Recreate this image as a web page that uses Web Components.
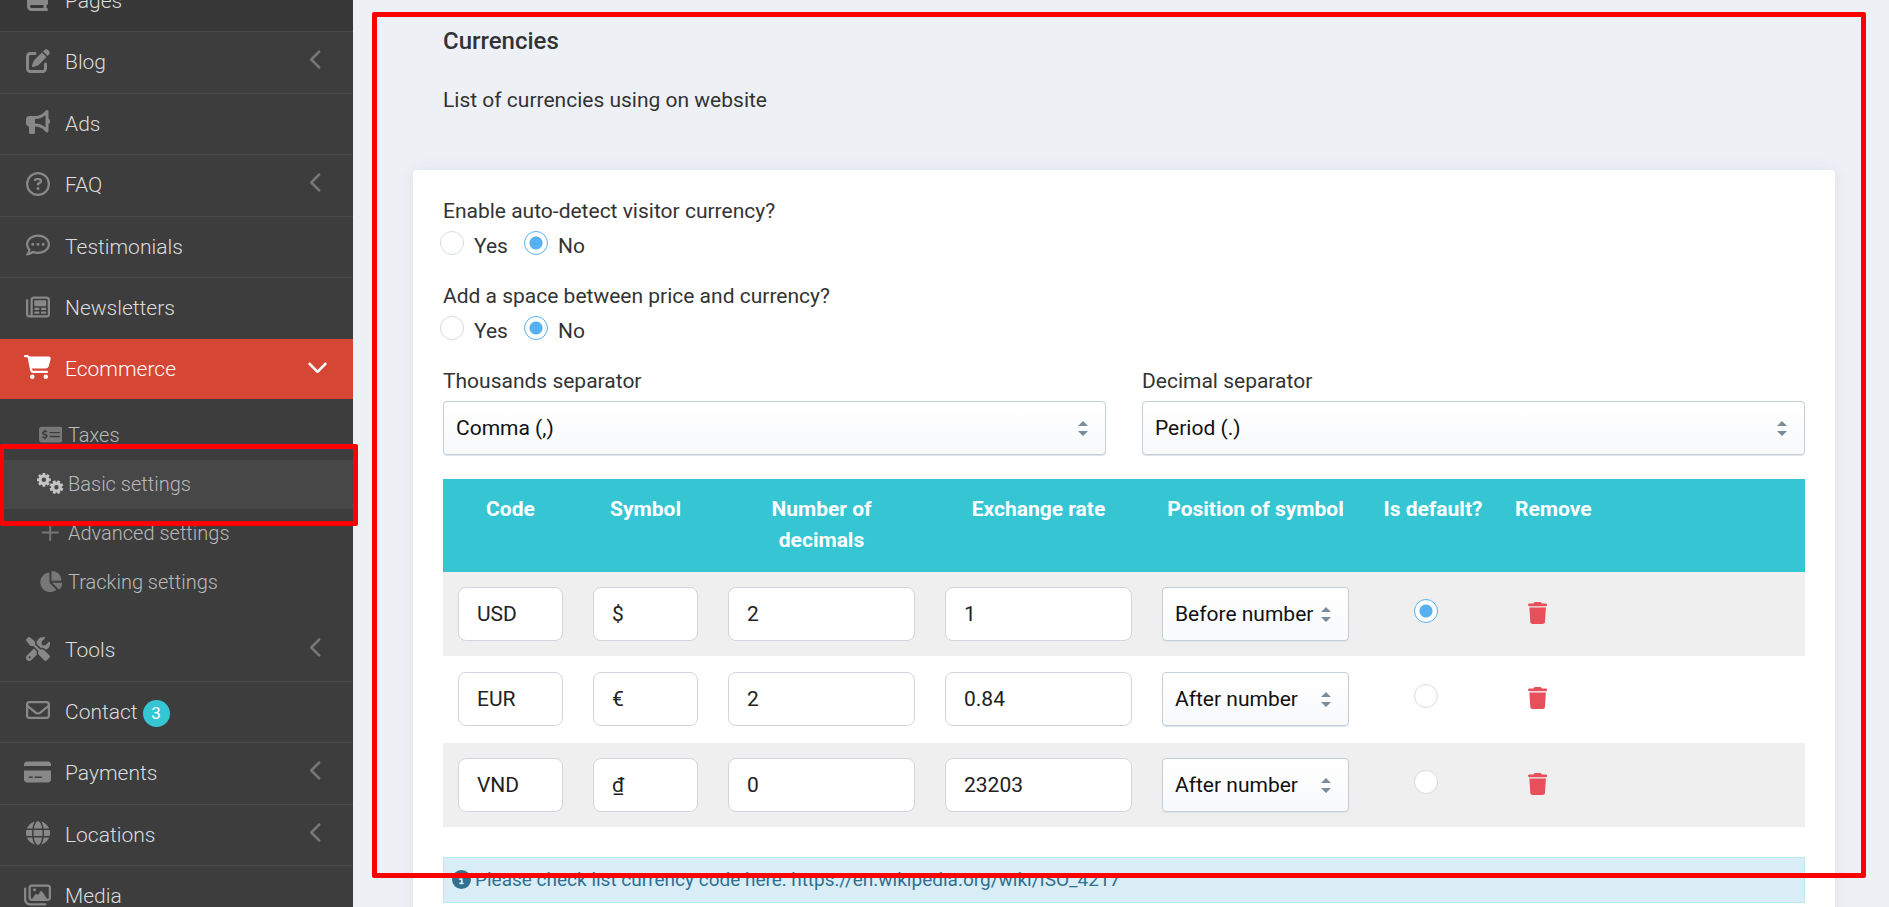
<!DOCTYPE html>
<html lang="en">
<head>
<meta charset="utf-8">
<title>Currencies</title>
<style>
  html, body { margin: 0; height: 100%; }
  body { font-family: Roboto, "Liberation Sans", sans-serif; font-size: 21px; line-height: 31px; color: #333; background: #edf1f6; overflow: hidden; }
</style>
</head>
<body>
<admin-app></admin-app>
<script>
const ICONS = {
  book: ['0 0 448 512', 'M96 0C43 0 0 43 0 96V416c0 53 43 96 96 96H384h32c17.700 0 32-14.300 32-32s-14.300-32-32-32V384c17.700 0 32-14.300 32-32V32c0-17.700-14.300-32-32-32H384 96zm0 384H352v64H96c-17.700 0-32-14.300-32-32s14.300-32 32-32z'],
  pen: ['0 0 512 512', 'M471.600 21.700c-21.900-21.900-57.300-21.900-79.200 0L362.300 51.700l97.900 97.900 30.100-30.100c21.900-21.900 21.900-57.300 0-79.200L471.600 21.700zm-299.200 220c-6.100 6.100-10.800 13.600-13.500 21.900l-29.600 88.800c-2.900 8.600-.6 18.100 5.800 24.600s15.900 8.700 24.600 5.800l88.800-29.600c8.200-2.700 15.700-7.400 21.900-13.500L437.700 172.300 339.700 74.300 172.400 241.700zM96 64C43 64 0 107 0 160V416c0 53 43 96 96 96H352c53 0 96-43 96-96V320c0-17.700-14.300-32-32-32s-32 14.300-32 32v96c0 17.700-14.300 32-32 32H96c-17.700 0-32-14.300-32-32V160c0-17.700 14.300-32 32-32h96c17.700 0 32-14.300 32-32s-14.300-32-32-32H96z'],
  horn: ['0 0 512 512', 'M480 32c0-12.900-7.800-24.600-19.800-29.600s-25.700-2.200-34.900 6.900L381.700 53c-48 48-113.100 75-181 75H192 160 64c-35.300 0-64 28.700-64 64v96c0 35.300 28.700 64 64 64l0 128c0 17.700 14.300 32 32 32h64c17.700 0 32-14.300 32-32V352l8.700 0c67.900 0 133 27 181 75l43.600 43.600c9.200 9.200 22.900 11.900 34.900 6.900s19.800-16.600 19.800-29.600V300.400c18.600-8.800 32-32.500 32-60.400s-13.400-51.600-32-60.400V32zm-64 76.700V240 371.300C357.200 317.800 280.500 288 200.700 288H192V192h8.700c79.800 0 156.500-29.800 215.300-83.300z'],
  question: ['0 0 512 512', 'M464 256A208 208 0 1 0 48 256a208 208 0 1 0 416 0zM0 256a256 256 0 1 1 512 0A256 256 0 1 1 0 256zm169.800-90.700c7.900-22.300 29.100-37.300 52.800-37.300h58.300c34.900 0 63.100 28.300 63.100 63.100c0 22.600-12.100 43.500-31.700 54.800L280 264.400c-.2 13-10.900 23.600-24 23.600c-13.300 0-24-10.700-24-24V250.500c0-8.600 4.600-16.500 12.100-20.800l44.300-25.400c4.700-2.700 7.600-7.700 7.600-13.100c0-8.400-6.800-15.100-15.100-15.100H222.600c-3.400 0-6.400 2.100-7.500 5.300l-.4 1.200c-4.400 12.500-18.200 19-30.600 14.600s-19-18.200-14.600-30.600l.3-1.200zM224 352a32 32 0 1 1 64 0 32 32 0 1 1 -64 0z'],
  comment: ['0 0 512 512', 'M168.200 384.900c-15-5.400-31.700-3.100-44.600 6.400c-8.200 6-22.300 14.800-39.400 22.700c5.600-14.700 9.900-31.300 11.300-49.400c1-12.900-3.300-25.700-11.800-35.500C60.400 302.800 48 272 48 240c0-79.500 83.300-160 208-160s208 80.500 208 160s-83.300 160-208 160c-31.600 0-61.300-5.500-87.800-15.100zM26.300 423.800c-1.600 2.700-3.300 5.400-5.100 8.100l-.3 .5c-1.600 2.300-3.200 4.600-4.800 6.900c-3.500 4.700-7.300 9.300-11.300 13.500c-4.600 4.600-5.900 11.400-3.400 17.400c2.500 6 8.300 9.900 14.800 9.900c5.100 0 10.200-.3 15.300-.8l.7-.1c4.400-.5 8.800-1.100 13.200-1.900c.8-.1 1.600-.3 2.400-.5c17.800-3.500 34.900-9.500 50.100-16.100c22.900-10 42.400-21.900 54.300-30.600c31.800 11.500 67 17.900 104.100 17.900c141.400 0 256-93.100 256-208S397.400 32 256 32S0 125.100 0 240c0 45.100 17.700 86.800 47.700 120.900c-1.900 24.500-11.400 46.300-21.400 62.900zM144 272a32 32 0 1 0 0-64 32 32 0 1 0 0 64zm144-32a32 32 0 1 0 -64 0 32 32 0 1 0 64 0zm80 32a32 32 0 1 0 0-64 32 32 0 1 0 0 64z'],
  news: ['0 0 512 512', 'M168 80c-13.300 0-24 10.700-24 24V408c0 8.400-1.400 16.500-4.100 24H440c13.300 0 24-10.700 24-24V104c0-13.300-10.700-24-24-24H168zM72 480c-39.800 0-72-32.200-72-72V112C0 98.700 10.700 88 24 88s24 10.700 24 24V408c0 13.300 10.700 24 24 24s24-10.700 24-24V104c0-39.800 32.200-72 72-72H440c39.800 0 72 32.200 72 72V408c0 39.800-32.200 72-72 72H72zM176 136c0-13.300 10.700-24 24-24H408c13.300 0 24 10.700 24 24v80c0 13.300-10.700 24-24 24H200c-13.300 0-24-10.700-24-24V136zm24 136h64c13.300 0 24 10.700 24 24s-10.700 24-24 24H200c-13.300 0-24-10.700-24-24s10.700-24 24-24zm144 0h64c13.300 0 24 10.700 24 24s-10.700 24-24 24H344c-13.300 0-24-10.700-24-24s10.700-24 24-24zM200 352h64c13.300 0 24 10.700 24 24s-10.700 24-24 24H200c-13.300 0-24-10.700-24-24s10.700-24 24-24zm144 0h64c13.300 0 24 10.700 24 24s-10.700 24-24 24H344c-13.300 0-24-10.700-24-24s10.700-24 24-24z'],
  cart: ['0 0 576 512', 'M0 24C0 10.700 10.700 0 24 0H69.500c22 0 41.500 12.800 50.600 32h411c26.300 0 45.500 25 38.600 50.400l-41 152.300c-8.500 31.400-37 53.300-69.500 53.300H170.700l5.400 28.500c2.200 11.300 12.100 19.500 23.600 19.500H488c13.300 0 24 10.700 24 24s-10.700 24-24 24H199.700c-34.600 0-64.300-24.600-70.700-58.500L77.400 54.500c-.7-3.800-4-6.500-7.900-6.500H24C10.700 48 0 37.300 0 24zM128 464a48 48 0 1 1 96 0 48 48 0 1 1 -96 0zm336-48a48 48 0 1 1 0 96 48 48 0 1 1 0-96z'],
  moneycheck: ['0 0 576 512', 'M64 64C28.700 64 0 92.700 0 128V384c0 35.300 28.700 64 64 64H512c35.300 0 64-28.700 64-64V128c0-35.300-28.700-64-64-64H64zM272 192H496c8.800 0 16 7.200 16 16s-7.200 16-16 16H272c-8.800 0-16-7.200-16-16s7.200-16 16-16zM256 304c0-8.800 7.200-16 16-16H496c8.800 0 16 7.200 16 16s-7.200 16-16 16H272c-8.800 0-16-7.200-16-16zM164 152v13.900c7.500 1.200 14.600 2.900 21.100 4.700c10.700 2.800 17 13.800 14.200 24.500s-13.800 17-24.500 14.200c-11-2.900-21.600-5-31.200-5.200c-7.900-.1-16 1.800-21.500 5c-4.800 2.800-6.200 5.600-6.200 9.300c0 1.800 .1 3.500 5.300 6.700c6.300 3.800 15.500 6.700 28.300 10.500l.7 .2c11.200 3.400 25.600 7.700 37.100 15c12.900 8.100 24.300 21.300 24.600 41.600c.3 20.900-10.500 36.100-24.800 45c-7.200 4.500-15.200 7.300-23.200 9V360c0 11-9 20-20 20s-20-9-20-20V345.400c-10.300-2.200-20-5.500-28.200-8.400c-2.100-.7-4.100-1.400-6.100-2.100c-10.500-3.500-16.100-14.800-12.600-25.300s14.800-16.100 25.300-12.600c2.500 .8 4.900 1.700 7.200 2.400c13.600 4.600 24 8.100 35.100 8.500c8.600 .3 16.500-1.600 21.400-4.700c4.100-2.500 6-5.500 5.900-10.500c0-2.900-.8-5-5.900-8.200c-6.300-4-15.400-6.900-28-10.700l-1.700-.5c-10.900-3.300-24.600-7.400-35.600-14c-12.700-7.700-24.600-20.500-24.700-40.700c-.1-21.100 11.800-35.700 25.800-43.900c6.900-4.100 14.500-6.800 22.200-8.500V152c0-11 9-20 20-20s20 9 20 20z'],
  plus: ['0 0 448 512', 'M248 72c0-13.300-10.700-24-24-24s-24 10.700-24 24V232H40c-13.300 0-24 10.700-24 24s10.700 24 24 24H200V440c0 13.300 10.700 24 24 24s24-10.700 24-24V280H408c13.300 0 24-10.700 24-24s-10.700-24-24-24H248V72z'],
  pie: ['0 0 576 512', 'M304 240V16.600c0-9 7-16.600 16-16.600C443.700 0 544 100.300 544 224c0 9-7.600 16-16.600 16H304zM32 272C32 150.700 122.100 50.300 239 34.300c9.200-1.300 17 6.100 17 15.400V288L412.500 444.500c6.700 6.700 6.200 17.700-1.500 23.100C371.800 495.600 323.800 512 272 512C139.500 512 32 404.600 32 272zm526.400 16c9.300 0 16.600 7.800 15.400 17c-7.700 55.900-34.600 105.600-73.900 142.300c-6 5.600-15.400 5.200-21.200-.7L320 288H558.400z'],
  tools: ['0 0 512 512', 'M78.600 5C69.100-2.400 55.600-1.500 47 7L7 47c-8.500 8.500-9.400 22-2.100 31.600l80 104c4.500 5.900 11.600 9.400 19 9.400h54.100l109 109c-14.700 29-10 65.400 14.300 89.600l112 112c12.500 12.500 32.800 12.500 45.300 0l64-64c12.500-12.500 12.500-32.800 0-45.300l-112-112c-24.200-24.200-60.600-29-89.600-14.300l-109-109V104c0-7.500-3.500-14.500-9.400-19L78.600 5zM19.900 396.100C7.200 408.800 0 426.100 0 444.100C0 481.600 30.400 512 67.900 512c18 0 35.300-7.200 48-19.900L233.700 374.300c-7.800-20.900-9-43.600-3.600-65.100l-61.700-61.700L19.900 396.100zM512 144c0-10.500-1.100-20.700-3.200-30.500c-2.400-11.200-16.100-14.100-24.200-6l-63.900 63.900c-3 3-7.100 4.700-11.300 4.700H352c-8.800 0-16-7.200-16-16V102.600c0-4.200 1.700-8.300 4.700-11.300l63.900-63.900c8.100-8.100 5.200-21.800-6-24.200C388.700 1.100 378.500 0 368 0C288.500 0 224 64.500 224 144l0 .8 85.300 85.300c36-9.100 75.800 .5 104 28.700L429 274.500c49-23 83-72.800 83-130.500zM56 432a24 24 0 1 1 48 0 24 24 0 1 1 -48 0z'],
  mail: ['0 0 512 512', 'M64 112c-8.800 0-16 7.200-16 16v22.100L220.500 291.700c20.700 17 50.400 17 71.100 0L464 150.100V128c0-8.800-7.200-16-16-16H64zM48 212.200V384c0 8.800 7.200 16 16 16H448c8.800 0 16-7.200 16-16V212.200L322 328.800c-38.400 31.500-93.700 31.500-132 0L48 212.200zM0 128C0 92.700 28.700 64 64 64H448c35.300 0 64 28.700 64 64V384c0 35.300-28.700 64-64 64H64c-35.300 0-64-28.700-64-64V128z'],
  card: ['0 0 576 512', 'M64 32C28.700 32 0 60.700 0 96v32H576V96c0-35.300-28.700-64-64-64H64zM576 224H0V416c0 35.300 28.700 64 64 64H512c35.300 0 64-28.700 64-64V224zM112 352h64c8.800 0 16 7.200 16 16s-7.200 16-16 16H112c-8.800 0-16-7.200-16-16s7.200-16 16-16zm112 16c0-8.800 7.200-16 16-16H368c8.800 0 16 7.200 16 16s-7.200 16-16 16H240c-8.800 0-16-7.200-16-16z'],
  globe: ['0 0 512 512', 'M352 256c0 22.200-1.200 43.600-3.300 64H163.300c-2.200-20.400-3.300-41.800-3.300-64s1.200-43.600 3.300-64H348.700c2.200 20.400 3.300 41.800 3.300 64zm28.800-64H503.900c5.300 20.500 8.100 41.900 8.100 64s-2.800 43.500-8.100 64H380.800c2.100-20.600 3.200-42 3.200-64s-1.100-43.400-3.200-64zm112.600-32H376.700c-10-63.900-29.800-117.400-55.300-151.600c78.300 20.700 142 77.500 171.900 151.600zm-149.100 0H167.700c6.100-36.400 15.500-68.600 27-94.700c10.500-23.600 22.200-40.700 33.500-51.500C239.400 3.200 248.700 0 256 0s16.600 3.200 27.800 13.800c11.300 10.800 23 27.900 33.500 51.500c11.600 26 20.900 58.200 27 94.700zm-209 0H18.600C48.600 85.900 112.200 29.100 190.600 8.400C165.100 42.600 145.300 96.100 135.300 160zM8.100 192H131.200c-2.100 20.600-3.200 42-3.200 64s1.100 43.400 3.200 64H8.100C2.800 299.500 0 278.100 0 256s2.800-43.500 8.100-64zM194.700 446.600c-11.600-26-20.900-58.200-27-94.600H344.300c-6.100 36.400-15.500 68.600-27 94.600c-10.500 23.600-22.200 40.700-33.500 51.500C272.600 508.800 263.300 512 256 512s-16.600-3.200-27.800-13.800c-11.300-10.800-23-27.900-33.500-51.500zM135.300 352c10 63.900 29.800 117.400 55.300 151.600C112.200 482.900 48.600 426.100 18.600 352H135.300zm358.100 0c-30 74.100-93.600 130.900-171.900 151.600c25.500-34.200 45.200-87.700 55.300-151.600H493.400z'],
  media: ['0 0 576 512', 'M160 80H512c8.800 0 16 7.200 16 16V320c0 8.800-7.200 16-16 16H490.800L388.100 178.900c-4.400-6.800-12-10.900-20.100-10.900s-15.700 4.100-20.100 10.900l-52.200 79.800-12.400-16.900c-4.500-6.200-11.700-9.800-19.400-9.800s-14.800 3.600-19.400 9.800L175.600 336H160c-8.800 0-16-7.200-16-16V96c0-8.800 7.200-16 16-16zM96 96V320c0 35.300 28.700 64 64 64H512c35.300 0 64-28.700 64-64V96c0-35.300-28.700-64-64-64H160c-35.300 0-64 28.700-64 64zM48 120c0-13.300-10.700-24-24-24S0 106.700 0 120V344c0 75.100 60.900 136 136 136H456c13.300 0 24-10.700 24-24s-10.700-24-24-24H136c-48.600 0-88-39.400-88-88V120zm208 24a32 32 0 1 0 -64 0 32 32 0 1 0 64 0z'],
  trash: ['0 0 448 512', 'M135.200 17.700C140.600 6.800 151.700 0 163.800 0H284.200c12.100 0 23.200 6.800 28.600 17.700L320 32h96c17.700 0 32 14.300 32 32s-14.300 32-32 32H32C14.300 96 0 81.700 0 64S14.300 32 32 32h96l7.200-14.300zM32 128H416L394.800 467c-1.600 25.300-22.600 45-47.900 45H101.100c-25.300 0-46.300-19.700-47.900-45L32 128z'],
  info: ['0 0 512 512', 'M256 512A256 256 0 1 0 256 0a256 256 0 1 0 0 512zM216 336h24V272H216c-13.300 0-24-10.700-24-24s10.700-24 24-24h48c13.300 0 24 10.700 24 24v88h8c13.300 0 24 10.700 24 24s-10.700 24-24 24H216c-13.300 0-24-10.700-24-24s10.700-24 24-24zm40-208a32 32 0 1 1 0 64 32 32 0 1 1 0-64z'],
  left: ['0 0 320 512', 'M9.400 233.400c-12.500 12.500-12.500 32.800 0 45.300l192 192c12.500 12.500 32.800 12.500 45.300 0s12.500-32.800 0-45.300L77.300 256 246.600 86.600c12.500-12.500 12.500-32.800 0-45.300s-32.800-12.500-45.300 0l-192 192z'],
  down: ['0 0 512 512', 'M233.400 406.600c12.500 12.500 32.800 12.500 45.300 0l192-192c12.500-12.500 12.500-32.800 0-45.300s-32.800-12.500-45.300 0L256 338.700 86.600 169.400c-12.500-12.500-32.800-12.500-45.300 0s-12.500 32.800 0 45.300l192 192z']
};

/* A toothed wheel with a round hole, as one path. */
function gear(cx, cy, r, hole, turn) {
  const pts = [];
  for (let i = 0; i < 8; i++) {
    const a = turn + i * Math.PI / 4;
    [[-0.28, 0.76], [-0.2, 1], [0.2, 1], [0.28, 0.76]].forEach(([d, k]) =>
      pts.push((cx + Math.cos(a + d) * r * k).toFixed(0) + ' ' + (cy + Math.sin(a + d) * r * k).toFixed(0)));
  }
  return `M${pts.join('L')}zM${cx - hole} ${cy}a${hole} ${hole} 0 1 0 ${hole * 2} 0a${hole} ${hole} 0 1 0 ${-hole * 2} 0z`;
}
ICONS.gears = ['0 0 640 512', gear(168, 166, 172, 54, 0) + gear(474, 346, 172, 54, 0.39)];

function define(name, html) {
  customElements.define(name, class extends HTMLElement {
    constructor() {
      super();
      this.attachShadow({ mode: 'open' });
    }
    connectedCallback() {
      if (this.shadowRoot.childNodes.length) return;
      const t = document.createElement('template');
      t.innerHTML = typeof html === 'function' ? html(this) : html;
      this.shadowRoot.append(t.content.cloneNode(true));
    }
  });
}

define('app-icon', el => {
  const [box, path] = ICONS[el.getAttribute('name')];
  return `<style>
    :host { display: inline-flex; justify-content: center; flex: none; }
    svg { display: block; height: var(--icon-size, 24px); fill: currentColor; fill-rule: evenodd; }
  </style><svg viewBox="${box}" aria-hidden="true"><path d="${path}"/></svg>`;
});

define('nav-item', el => {
  const arrow = el.getAttribute('arrow');
  return `<style>
    :host { display: block; height: 62px; box-sizing: border-box; border-bottom: 1px solid #494949; color: #dcdcdc; font-weight: 300; }
    :host(:nth-of-type(odd)) { height: 61px; }
    :host([dim]) { background: #373737; }
    :host([active]) { position: relative; height: 60px; margin-top: -1px; border: 0; background: #d64635; color: #fff; }
    a { display: flex; align-items: center; height: 100%; padding: 0 24px; color: inherit; text-decoration: none; }
    .icon { width: 27px; margin: 0 14px 4px 0; color: #888; }
    .arrow { width: 24px; margin: 0 0 6px auto; color: #777; --icon-size: 21px; }
    :host([active]) .icon, :host([active]) .arrow { color: #fff; }
  </style>
  <a href="#"><app-icon class="icon" name="${el.getAttribute('icon')}"></app-icon><slot></slot>${arrow ? `<app-icon class="arrow" name="${arrow}"></app-icon>` : ''}</a>`;
});

define('nav-subitem', el => `<style>
    :host { display: block; position: relative; height: 49px; color: #b9b9b9; font-weight: 300; font-size: 20px; }
    :host([active]) { background: #474747; z-index: 1; }
    a { display: flex; align-items: center; height: 100%; padding-left: 37px; color: inherit; text-decoration: none; }
    app-icon { width: 27px; margin: 0 4px 2px 0; color: #777; --icon-size: 21px; }
    :host([active]) app-icon { color: #c4c4c4; }
  </style>
  <a href="#"><app-icon name="${el.getAttribute('icon')}"></app-icon><slot></slot></a><slot name="mark"></slot>`);

define('count-badge', `<style>
    :host { display: inline-grid; place-items: center; width: 27px; height: 27px; margin: 3px 0 0 5px; border-radius: 50%; background: #36c6d3; color: #fff; font-size: 17px; font-weight: 400; line-height: 27px; }
  </style><slot></slot>`);

/* Red frame that marks an area; the user sets its inset. */
define('mark-frame', `<style>
    :host { position: absolute; box-sizing: border-box; border: 5px solid #f00; border-radius: 2px; pointer-events: none; }
  </style>`);

define('admin-sidebar', `<style>
    :host { display: block; width: 353px; flex: none; background: #3d3d3d; }
    nav { margin-top: -29px; }
    .sub { padding: 12px 0 13px; }
    mark-frame { inset: -16px -5px -17px 0; border-left-width: 4px; }
  </style>
  <nav>
    <nav-item icon="book" dim>Pages</nav-item>
    <nav-item icon="pen" arrow="left">Blog</nav-item>
    <nav-item icon="horn">Ads</nav-item>
    <nav-item icon="question" arrow="left">FAQ</nav-item>
    <nav-item icon="comment">Testimonials</nav-item>
    <nav-item icon="news">Newsletters</nav-item>
    <nav-item icon="cart" arrow="down" active>Ecommerce</nav-item>
    <div class="sub">
      <nav-subitem icon="moneycheck">Taxes</nav-subitem>
      <nav-subitem icon="gears" active>Basic settings<mark-frame slot="mark"></mark-frame></nav-subitem>
      <nav-subitem icon="plus">Advanced settings</nav-subitem>
      <nav-subitem icon="pie">Tracking settings</nav-subitem>
    </div>
    <nav-item icon="tools" arrow="left">Tools</nav-item>
    <nav-item icon="mail">Contact<count-badge>3</count-badge></nav-item>
    <nav-item icon="card" arrow="left">Payments</nav-item>
    <nav-item icon="globe" arrow="left">Locations</nav-item>
    <nav-item icon="media">Media</nav-item>
  </nav>`);

const RADIO = `
    input[type=radio] { appearance: none; box-sizing: border-box; width: 24px; height: 24px; margin: 0; border: 1px solid #d3dde0; border-radius: 50%; background: #fff; flex: none; }
    input[type=radio]:checked { border-color: #57b1f0; background: radial-gradient(circle, #57b1f0 6px, #fff 7px); }`;

define('radio-group', el => `<style>
    :host { display: block; margin-bottom: 20px; }
    fieldset { border: 0; margin: 0; padding: 0; min-width: 0; }
    legend { padding: 0; margin-bottom: 4px; }
    .row { display: flex; gap: 16px; line-height: 30px; margin-left: -3px; }
    label { display: flex; gap: 10px; }
    ${RADIO}
  </style>
  <fieldset><legend>${el.getAttribute('label')}</legend>
    <div class="row">
      <label><input type="radio" name="v" value="1">Yes</label>
      <label><input type="radio" name="v" value="0" checked>No</label>
    </div>
  </fieldset>`);

define('select-box', el => {
  const label = el.getAttribute('label');
  const opts = el.getAttribute('options').split('|');
  return `<style>
    :host { display: block; }
    label { display: block; margin-bottom: 4px; }
    .box { display: grid; }
    select, svg { grid-area: 1 / 1; }
    select { appearance: none; box-sizing: border-box; width: 100%; height: 54px; padding: 0 12px; border: 1px solid #c4cdd8; border-radius: 4px; background: linear-gradient(#fff, #f8f9fb); box-shadow: 0 1px 1px #dfe3e8; font: inherit; color: #111; }
    svg { justify-self: end; align-self: center; width: 10px; height: 15px; margin-right: 18px; fill: #798c9c; pointer-events: none; }
  </style>
  ${el.hasAttribute('compact') ? '' : `<label for="s">${label}</label>`}
  <div class="box"><select id="s" aria-label="${label}">${opts.map(o => `<option>${o}</option>`).join('')}</select>
  <svg viewBox="0 0 10 15" aria-hidden="true"><path d="M0 5L5 0L10 5zM0 10H10L5 15z"/></svg></div>`;
});

define('currency-table', () => {
  const rows = [
    ['USD', '$', '2', '1', 'Before number|After number', true],
    ['EUR', '€', '2', '0.84', 'After number|Before number', false],
    ['VND', '₫', '0', '23203', 'After number|Before number', false]
  ];
  const heads = ['Code', 'Symbol', 'Number of decimals', 'Exchange rate', 'Position of symbol', 'Is default?', 'Remove'];
  return `<style>
    :host { display: block; margin: 24px 0 30px; }
    table { width: 100%; table-layout: fixed; border-spacing: 0; }
    .narrow { width: 135px; }
    .wide { width: 217px; }
    .radio { width: 123px; }
    th { padding: 15px 15px 16px; background: #36c6d3; color: #fff; font-weight: 700; vertical-align: top; }
    th:nth-child(6) { padding-right: 0; }
    td { padding: 15px; text-align: center; }
    th:last-child { text-align: left; padding-left: 28px; }
    td:last-child { text-align: left; padding-left: 41px; }
    tr:nth-child(odd) td { background: #efefef; }
    tr:nth-child(even) td { border: solid #fff; border-width: 1px 0 2px; }
    input[type=text] { display: block; box-sizing: border-box; width: 100%; height: 54px; padding: 0 18px; border: 1px solid #d2d6dc; border-radius: 8px; background: #fff; font: inherit; color: #222; }
    select-box { text-align: left; }
    ${RADIO}
    td input[type=radio] { display: block; margin: 0 auto 6px; }
    button { display: block; padding: 0; border: 0; background: none; color: #e7505a; --icon-size: 22px; }
  </style>
  <table>
    <colgroup><col class="narrow"><col class="narrow"><col class="wide"><col class="wide"><col class="wide"><col class="radio"><col></colgroup>
    <thead><tr>${heads.map(h => `<th scope="col">${h}</th>`).join('')}</tr></thead>
    <tbody>${rows.map(r => `<tr>
      ${r.slice(0, 4).map((v, i) => `<td><input type="text" value="${v}" aria-label="${heads[i]}"></td>`).join('')}
      <td><select-box compact label="Position of symbol" options="${r[4]}"></select-box></td>
      <td><input type="radio" name="default" aria-label="Is default"${r[5] ? ' checked' : ''}></td>
      <td><button type="button" aria-label="Remove"><app-icon name="trash"></app-icon></button></td>
    </tr>`).join('')}</tbody>
  </table>`;
});

define('info-note', `<style>
    :host { display: flex; align-items: center; gap: 4px; height: 46px; box-sizing: border-box; padding: 0 8px 2px; border: 1px solid #bce8f1; background: #d9edf7; color: #31708f; font-size: 19px; --icon-size: 19px; }
  </style><app-icon name="info"></app-icon><span><slot></slot></span>`);

define('settings-card', `<style>
    :host { display: block; padding: 26px 30px 60px; border-radius: 4px; background: #fff; box-shadow: 0 1px 15px 1px rgba(69, 65, 78, .08); }
  </style><slot></slot>`);

define('currency-page', `<style>
    :host { display: block; position: relative; flex: 1; min-width: 0; overflow-y: auto; scrollbar-width: none; padding: 26px 54px 0 60px; box-sizing: border-box; }
    header { padding: 0 30px; margin-bottom: 54px; }
    h2 { margin: 0 0 28px; font-size: 24px; font-weight: 500; line-height: 31px; }
    p { margin: 0; }
    .pair { display: grid; grid-template-columns: 1fr 1fr; gap: 36px; }
    mark-frame { inset: 12px 23px 29px 19px; }
  </style>
  <header><h2>Currencies</h2><p>List of currencies using on website</p></header>
  <settings-card>
    <radio-group label="Enable auto-detect visitor currency?"></radio-group>
    <radio-group label="Add a space between price and currency?"></radio-group>
    <div class="pair">
      <select-box label="Thousands separator" options="Comma (,)|Period (.)|Space"></select-box>
      <select-box label="Decimal separator" options="Period (.)|Comma (,)|Space"></select-box>
    </div>
    <currency-table></currency-table>
    <info-note>Please check list currency code here: https://en.wikipedia.org/wiki/ISO_4217</info-note>
  </settings-card>
  <mark-frame></mark-frame>`);

define('admin-app', `<style>
    :host { display: flex; height: 100vh; overflow: hidden; }
    admin-sidebar { position: relative; z-index: 1; }
  </style><admin-sidebar></admin-sidebar><currency-page></currency-page>`);
</script>
</body>
</html>
